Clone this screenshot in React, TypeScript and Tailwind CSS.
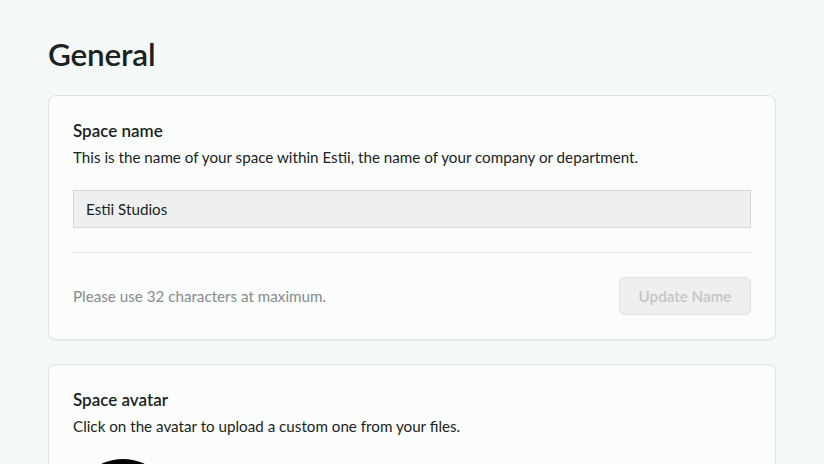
export default function App() {
    return (
        <div className="min-h-screen bg-[#f5f8f8] px-12 pt-[33px] text-[#1a2321]" style={{ fontFamily: 'Lato, "Noto Sans", sans-serif' }}>
            <h1 className="text-[31.5px] font-semibold leading-[42px] tracking-[-0.2px]">General</h1>

            <div className="mt-5 rounded-lg border border-[#dfe3e2] bg-[#fbfcfc] px-6 pt-[24px] pb-6 shadow-[0_1px_2px_rgba(0,0,0,0.05)]">
                <h2 className="text-[17px] font-semibold leading-[22px]">Space name</h2>
                <p className="mt-[5px] text-[15.2px] leading-[20px]">
                    This is the name of your space within Estii, the name of your company or department.
                </p>
                <div className="mt-[23px] flex h-[38px] items-center border border-[#d6dad9] bg-[#edf0ef] px-3 text-[15.2px]">
                    Estii Studios
                </div>
                <div className="mt-6 border-t border-[#e1e4e3]" />
                <div className="mt-6 flex items-center justify-between">
                    <span className="text-[15.2px] text-[#858b89]">Please use 32 characters at maximum.</span>
                    <button className="h-[38px] w-[132px] rounded-md border border-[#e1e4e3] bg-[#eeefef] text-[15.2px] font-semibold text-[#c3c7c6]">
                        Update Name
                    </button>
                </div>
            </div>

            <div className="mt-6 rounded-lg border border-[#dfe3e2] bg-[#fbfcfc] px-6 pt-[24px] pb-6 shadow-[0_1px_2px_rgba(0,0,0,0.05)]">
                <h2 className="text-[17px] font-semibold leading-[22px]">Space avatar</h2>
                <p className="mt-[5px] text-[15.2px] leading-[20px]">
                    Click on the avatar to upload a custom one from your files.
                </p>
                <div className="mt-[23px] h-[100px] w-[100px] rounded-full bg-black" />
            </div>
        </div>
    );
}
